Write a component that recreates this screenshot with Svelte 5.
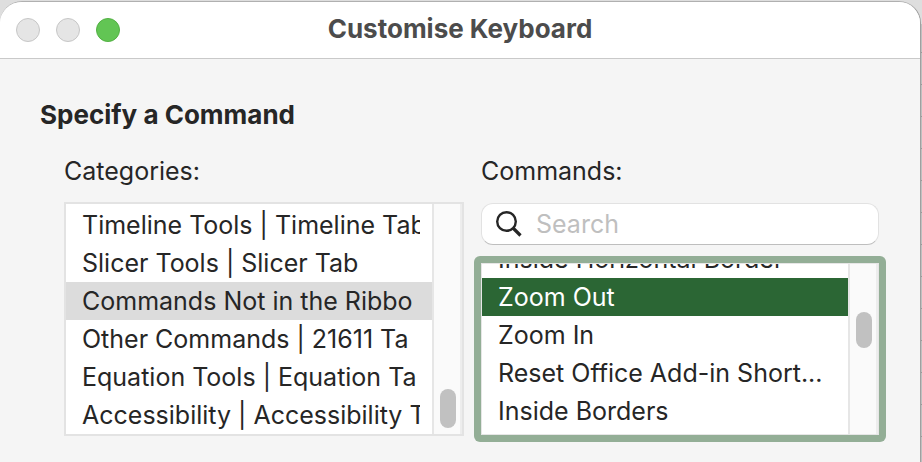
<script lang="ts">
  const categories = [
    'Timeline Tools | Timeline Tab',
    'Slicer Tools | Slicer Tab',
    'Commands Not in the Ribbo',
    'Other Commands | 21611 Ta',
    'Equation Tools | Equation Ta',
    'Accessibility | Accessibility T',
  ];
  const commands = [
    'Inside Horizontal Border',
    'Zoom Out',
    'Zoom In',
    'Reset Office Add-in Short...',
    'Inside Borders',
  ];

  let category = $state(categories[2]);
  let command = $state(commands[1]);
  let query = $state('');
</script>

{#snippet scrollbar(top: number, height: number)}
  <div class="track">
    <div class="thumb" style="margin-top: {top}px; height: {height}px"></div>
  </div>
{/snippet}

<main class="window">
  <header class="titlebar">
    <div class="lights">
      <button class="light" aria-label="Close" disabled></button>
      <button class="light" aria-label="Minimise" disabled></button>
      <button class="light zoom" aria-label="Zoom"></button>
    </div>
    <h1>Customise Keyboard</h1>
  </header>

  <section class="content">
    <h2>Specify a Command</h2>
    <div class="columns">
      <div class="column">
        <span class="label" id="categories-label">Categories:</span>
        <div class="listbox categories">
          <div class="items" role="listbox" aria-labelledby="categories-label">
            {#each categories as item}
              <button
                class="item"
                class:selected={item === category}
                role="option"
                aria-selected={item === category}
                onclick={() => (category = item)}
              ><span>{item}</span></button>
            {/each}
          </div>
          {@render scrollbar(185, 39)}
        </div>
      </div>

      <div class="column">
        <label class="label" for="search">Commands:</label>
        <div class="search">
          <svg width="28" height="28" viewBox="0 0 28 28" aria-hidden="true">
            <circle cx="11.5" cy="11.5" r="9.3" />
            <path d="M18 18 L25.5 25.5" />
          </svg>
          <input id="search" type="text" placeholder="Search" bind:value={query} />
        </div>
        <div class="focus-ring">
          <div class="listbox commands">
            <div class="items" role="listbox" aria-label="Commands">
              {#each commands as item}
                <button
                  class="item"
                  class:selected={item === command}
                  role="option"
                  aria-selected={item === command}
                  onclick={() => (command = item)}
                ><span>{item}</span></button>
              {/each}
            </div>
            {@render scrollbar(48, 36)}
          </div>
        </div>
      </div>
    </div>
  </section>
</main>

<style>
  /* sheet grid showing behind the window */
  :global(body) {
    background:
      linear-gradient(#dedede, #dedede) no-repeat 0 0 / 100% 24px,
      repeating-linear-gradient(#c0c0c0 0 20px, #999 20px 21px, #c0c0c0 21px 32px);
    font-family: Inter, "Liberation Sans", sans-serif;
    color: #262626;
  }

  button, input {
    font: inherit;
    color: inherit;
    border: 0;
    padding: 0;
    margin: 0;
    background: none;
  }

  .window {
    margin: 1px 1px 0 0;
    min-height: calc(100vh - 2px);
    border-top: 1px solid #b0b0b0;
    border-right: 1px solid #a0a0a0;
    border-radius: 22px 22px 0 0;
    background: #f5f5f5;
    overflow: hidden;
  }

  .titlebar {
    display: grid;
    grid-template-columns: 1fr auto 1fr;
    align-items: center;
    height: 56px;
    padding: 0 16px;
    background: #fff;
    border-bottom: 1px solid #c9c9c9;
  }

  .lights {
    display: flex;
    gap: 16px;
  }

  .light {
    width: 24px;
    height: 24px;
    border: 1px solid #c6c6c6;
    border-radius: 50%;
    background: #e5e5e5;
  }

  .light.zoom {
    border-color: #52b043;
    background: #62c554;
  }

  h1, h2 {
    margin: 0;
    font-size: 26px;
    line-height: 32px;
    font-weight: 700;
  }

  h1 {
    padding-bottom: 2px;
    color: #4c4c4c;
  }

  .content {
    padding: 40px 41px 20px 40px;
  }

  .columns {
    display: grid;
    grid-template-columns: 400fr 398fr;
    gap: 17px;
    padding: 24px 0 0 24px;
  }

  .column {
    min-width: 0;
    display: flex;
    flex-direction: column;
  }

  .label {
    font-size: 25px;
    line-height: 32px;
    margin-bottom: 15px;
  }

  .listbox {
    display: flex;
    box-sizing: border-box;
    background: #fff;
    overflow: hidden;
  }

  .categories {
    height: 234px;
    border: 2px solid #e3e3e3;
  }

  .commands {
    height: 172px;
    border: 1px solid #e6e6e6;
  }

  .items {
    flex: 1;
    min-width: 0;
    display: flex;
    flex-direction: column;
    justify-content: flex-end;
  }

  .commands .items {
    padding-bottom: 4px;
  }

  .item {
    flex: none;
    height: 38px;
    padding: 0 12px 0 16px;
    font-size: 25px;
    line-height: 38px;
    text-align: left;
  }

  .item span {
    display: block;
    overflow: hidden;
    white-space: nowrap;
  }

  .item.selected {
    background: #dcdcdc;
  }

  .commands .item.selected {
    background: #2b6634;
    color: #fff;
  }

  .track {
    flex: none;
    box-sizing: border-box;
    width: 30px;
    padding-left: 6px;
    background: #fafafa;
    border-left: 2px solid #e6e6e6;
    border-right: 2px solid #ededed;
  }

  .thumb {
    width: 16px;
    border-radius: 8px;
    background: #c1c1c1;
  }

  .search {
    display: flex;
    align-items: center;
    gap: 13px;
    box-sizing: border-box;
    height: 42px;
    margin: 1px 0 18px;
    padding: 0 13px;
    background: #fff;
    border: 1px solid #e2e2e2;
    border-bottom-color: #bebebe;
    border-radius: 12px;
  }

  .search svg {
    flex: none;
    fill: none;
    stroke: #262626;
    stroke-width: 2.4;
  }

  .search path {
    stroke-width: 3.2;
  }

  .search input {
    flex: 1;
    min-width: 0;
    font-size: 25px;
    line-height: 32px;
    outline: none;
  }

  .search input::placeholder {
    color: #bfbfbf;
    opacity: 1;
  }

  .focus-ring {
    margin: -7px;
    padding: 7px;
    border-radius: 6px;
    background: #93ae96;
  }
</style>
